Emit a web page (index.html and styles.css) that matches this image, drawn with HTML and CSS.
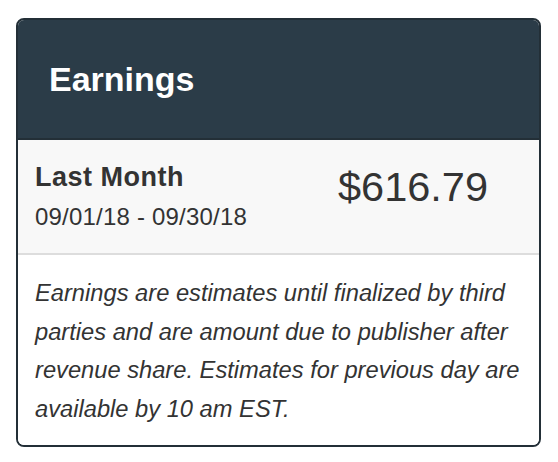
FILE: index.html
```html
<!DOCTYPE html>
<html>
<head>
<meta charset="utf-8">
<link rel="stylesheet" href="styles.css">
</head>
<body>
<div class="card">
  <div class="card-header">
    <h1 class="card-title">Earnings</h1>
  </div>
  <div class="summary">
    <div class="period">
      <div class="period-name">Last Month</div>
      <div class="period-dates">09/01/18 - 09/30/18</div>
    </div>
    <div class="amount">$616.79</div>
  </div>
  <div class="note">
    <p>Earnings are estimates until finalized by third parties and are amount due to publisher after revenue share. Estimates for previous day are available by 10 am EST.</p>
  </div>
</div>
</body>
</html>
```
FILE: styles.css
```css
html, body {
  margin: 0;
  padding: 0;
  background: #ffffff;
}
body {
  font-family: "Liberation Sans", Arial, sans-serif;
  color: #333333;
}
.card {
  margin: 18px 0 0 16px;
  width: 525px;
  box-sizing: border-box;
  border: 2px solid #232f37;
  border-radius: 8px;
  overflow: hidden;
}
.card-header {
  background: #2b3c48;
  height: 118px;
  display: flex;
  align-items: center;
  padding-left: 31px;
  border-bottom: 2px solid #232f37;
}
.card-title {
  margin: 0;
  color: #ffffff;
  font-size: 34px;
  font-weight: bold;
}
.summary {
  display: flex;
  background: #f8f8f8;
  height: 113px;
  border-bottom: 2px solid #dddddd;
}
.period {
  flex: 1;
  padding: 21px 0 0 17px;
}
.period-name {
  font-size: 27px;
  letter-spacing: 0.5px;
  font-weight: bold;
  line-height: 32px;
}
.period-dates {
  font-size: 24px;
  letter-spacing: 0.2px;
  line-height: 30px;
  margin-top: 9px;
}
.amount {
  flex: 1;
  text-align: center;
  font-size: 41.5px;
  padding-top: 22px;
  line-height: 50px;
}
.note {
  padding: 19px 17px 17px 17px;
  background: #ffffff;
}
.note p {
  margin: 0;
  font-size: 23.7px;
  font-style: italic;
  line-height: 38.5px;
}
```
